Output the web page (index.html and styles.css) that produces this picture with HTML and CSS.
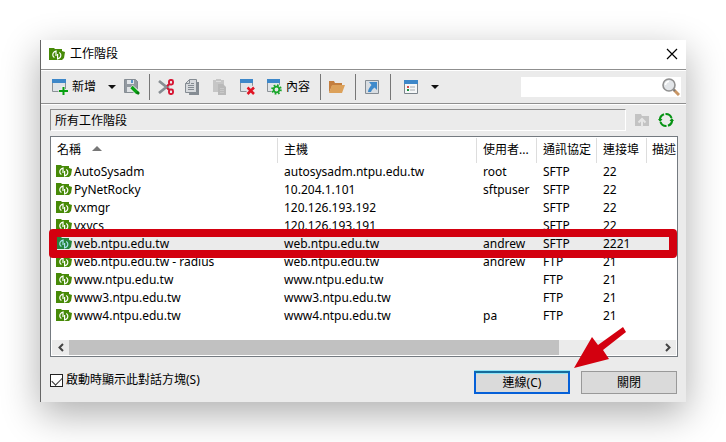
FILE: index.html
```html
<!DOCTYPE html>
<html lang="zh-Hant">
<head>
<meta charset="utf-8">
<title>工作階段</title>
<link rel="stylesheet" href="styles.css">
</head>
<body>
<svg class="defs" width="0" height="0" aria-hidden="true">
  <symbol id="session" viewBox="0 0 16 14">
    <path class="folder" d="M0 1h5l1 1h7v2l3 1-1 6-2 2H0z"/>
    <path class="mark" d="M7 9V4C4.800 4.800 3.600 6.200 3.800 8.200c.1 1 .8 1.900 1.600 2.400M8.600 7v5c2.200-.8 3.400-2.200 3.200-4.200-.1-1-.8-1.900-1.600-2.400" fill="none" stroke-width="1.200"/>
  </symbol>
</svg>
<main class="dialog">
  <header class="titlebar">
    <svg class="session-icon" width="16" height="14"><use href="#session"/></svg>
    <h1>工作階段</h1>
    <button class="close" aria-label="關閉視窗"><svg width="12" height="12" viewBox="0 0 12 12"><path d="M1 1l10 10M11 1L1 11" stroke="#000" stroke-width="1.200"/></svg></button>
  </header>

  <div class="toolbar">
    <div class="group">
      <button class="labelled"><svg width="16" height="16" viewBox="0 0 16 16"><path d="M.5.5h13v12H.5z" fill="#dfe4e8" stroke="#8b9196"/><path d="M0 0h14v4H0z" fill="#3d87c9"/><path d="M11 7v9M6.500 12H16" stroke="#ebebeb" stroke-width="4"/><path d="M11.500 8v8M7 12h9" stroke="#07a010" stroke-width="2"/></svg>新增</button>
      <button class="caret" aria-label="新增選項"><svg width="8" height="4" viewBox="0 0 8 4"><path d="M0 0h8L4 4z" fill="#111"/></svg></button>
      <button aria-label="儲存"><svg width="16" height="16" viewBox="0 0 16 16"><path d="M.5.500h11l2 2v11H.500z" fill="#9299a0" stroke="#858c93"/><path d="M3 1h7v4H3z" fill="#e2e5e8"/><path d="M7 1h2v3H7z" fill="#5994c9"/><path d="M3 8h7v5H3z" fill="#dfe2e5"/><path d="M7 8l7 6" stroke="#ebebeb" stroke-width="5"/><path d="M7.500 8l6 6" stroke="#0aa315" stroke-width="3.400"/><path d="M13 13l2 2" stroke="#067a0d" stroke-width="2.500"/></svg></button>
    </div>
    <div class="group spaced">
      <button aria-label="剪下"><svg width="16" height="16" viewBox="0 0 16 16"><path d="M1 2l10 8M1 14l10-8" stroke="#878d92" stroke-width="2.800"/><g fill="none" stroke="#d61432" stroke-width="1.900"><rect x="11" y="1" width="4" height="4.500" rx="1.500"/><rect x="11" y="10.500" width="4" height="4.500" rx="1.500"/><path d="M9 7l2.500-2M9 9l2.500 2"/></g></svg></button>
      <button aria-label="複製"><svg width="16" height="16" viewBox="0 0 16 16"><path d="M5 3h9v13H4" fill="#858c93"/><path d="M4.500.500h7v13h-11v-9z" fill="#d7dadd" stroke="#858c93"/><path d="M4.500.500v4h-4M3 6.500h6M3 8.500h6M3 10.500h6M6 4.500h3" stroke="#858c93" fill="none"/></svg></button>
      <button aria-label="貼上"><svg width="16" height="16" viewBox="0 0 16 16"><path d="M1 1h3V0h5v1h3v12H1z" fill="#c6c6c6"/><path d="M4 2h5v1H4z" fill="#ddd"/><path d="M6 5h5l3 3v8H6z" fill="#b9b9b9"/><path d="M8 9.500h4M8 11.500h4M8 13.500h4" stroke="#c8c8c8"/></svg></button>
      <button aria-label="刪除"><svg width="16" height="16" viewBox="0 0 16 16"><path d="M1.500.500h12v12h-12z" fill="#dfe4e8" stroke="#8b9196"/><path d="M1 0h13v4H1z" fill="#3d87c9"/><path d="M8 8l7 7M15 8l-7 7" stroke="#ebebeb" stroke-width="4"/><path d="M8.500 8.500l6.500 6.500M15 8.500l-6.500 6.500" stroke="#e01525" stroke-width="2.500"/></svg></button>
      <button class="labelled"><svg width="16" height="16" viewBox="0 0 16 16"><path d="M1.500.500h12v12h-12z" fill="#dfe4e8" stroke="#8b9196"/><path d="M1 0h13v4H1z" fill="#3d87c9"/><circle cx="10.500" cy="10.500" r="5.500" fill="#ebebeb"/><circle cx="10.500" cy="10.500" r="4.300" fill="none" stroke="#19a62a" stroke-width="2" stroke-dasharray="1.700 1.677"/><circle cx="10.500" cy="10.500" r="2.800" fill="#e5e8e5" stroke="#19a62a" stroke-width="1.800"/></svg>內容</button>
    </div>
    <div class="group">
      <button aria-label="開啟資料夾"><svg width="16" height="14" viewBox="0 0 16 14"><path d="M0 1h5l1 2h7v3H3L0 13z" fill="#c47f3f"/><path d="M3 5h13l-3 8H0z" fill="#dca15a"/></svg></button>
    </div>
    <div class="group">
      <button aria-label="建立捷徑"><svg width="16" height="16" viewBox="0 0 16 16"><path d="M1.500 1.500h13v13h-13z" fill="#d8dde2" stroke="#858c93"/><path d="M5 3h8v8l-2.500-2.500C9 10 7.500 11 7 13H4c0-3 2-5 3.500-7z" fill="#3f8acb"/></svg></button>
    </div>
    <div class="group view">
      <button aria-label="檢視"><svg width="16" height="14" viewBox="0 0 16 14"><path d="M1.500.500h13v13h-13z" fill="#f5f7f8" stroke="#7c858c"/><path d="M1 0h14v4H1z" fill="#3d87c9"/><path d="M4 6h2v2H4z" fill="#d34a4a"/><path d="M4 9h2v2H4z" fill="#16913a"/><path d="M7 7h5M7 10h5" stroke="#a8adb2"/></svg></button>
      <button class="caret" aria-label="檢視選項"><svg width="8" height="4" viewBox="0 0 8 4"><path d="M0 0h8L4 4z" fill="#111"/></svg></button>
    </div>
    <div class="search">
      <input type="text" aria-label="搜尋">
      <svg width="18" height="18" viewBox="0 0 18 18"><path d="M12 12l5 5" stroke="#c99664" stroke-width="3"/><path d="M11 11l2 2" stroke="#777" stroke-width="2"/><circle cx="7" cy="7" r="6" fill="#e2e5e8" stroke="#909090" stroke-width="1.600"/><path d="M3.500 7A3.500 3.500 0 0 1 7 3.500" stroke="#fff" stroke-width="1.500" fill="none"/></svg>
    </div>
  </div>

  <div class="content">
    <div class="location">
      <div class="path">所有工作階段</div>
      <button aria-label="上一層"><svg width="16" height="16" viewBox="0 0 16 16"><path d="M1 2h6l1 2h7v10H1z" fill="#c3c3c3"/><path d="M8 15V8M4.500 10.500L8 7l3.500 3.500" stroke="#e6e6e6" stroke-width="2" fill="none"/></svg></button>
      <button aria-label="重新整理"><svg width="16" height="16" viewBox="0 0 16 16"><g fill="none" stroke="#079314" stroke-width="2.200"><path d="M2 8.500A6 6 0 0 1 6 2.300M7.500 2A6 6 0 0 1 13.500 6M14 7.500A6 6 0 0 1 10 13.700M8.500 14A6 6 0 0 1 2.500 10"/></g><path d="M0 7h4.500L2.200 10zM11.500 9H16l-2.200-3z" fill="#079314"/></svg></button>
    </div>

    <div class="list">
      <table>
        <colgroup><col class="c-name"><col class="c-host"><col class="c-short"><col class="c-short"><col class="c-port"><col></colgroup>
        <thead><tr><th>名稱 <svg class="sort" width="10" height="5" viewBox="0 0 10 5"><path d="M0 5h10L5 0z" fill="#777"/></svg></th><th>主機</th><th>使用者...</th><th>通訊協定</th><th>連接埠</th><th>描述</th></tr></thead>
        <tbody>
          <tr><td><svg class="session-icon" width="16" height="14"><use href="#session"/></svg>AutoSysadm</td><td>autosysadm.ntpu.edu.tw</td><td>root</td><td>SFTP</td><td>22</td><td></td></tr>
          <tr><td><svg class="session-icon" width="16" height="14"><use href="#session"/></svg>PyNetRocky</td><td>10.204.1.101</td><td>sftpuser</td><td>SFTP</td><td>22</td><td></td></tr>
          <tr><td><svg class="session-icon" width="16" height="14"><use href="#session"/></svg>vxmgr</td><td>120.126.193.192</td><td></td><td>SFTP</td><td>22</td><td></td></tr>
          <tr><td><svg class="session-icon" width="16" height="14"><use href="#session"/></svg>vxvcs</td><td>120.126.193.191</td><td></td><td>SFTP</td><td>22</td><td></td></tr>
          <tr class="selected"><td><span class="highlight"></span><svg class="session-icon" width="16" height="14"><use href="#session"/></svg>web.ntpu.edu.tw</td><td>web.ntpu.edu.tw</td><td>andrew</td><td>SFTP</td><td>2221</td><td></td></tr>
          <tr><td><svg class="session-icon" width="16" height="14"><use href="#session"/></svg>web.ntpu.edu.tw - radius</td><td>web.ntpu.edu.tw</td><td>andrew</td><td>FTP</td><td>21</td><td></td></tr>
          <tr><td><svg class="session-icon" width="16" height="14"><use href="#session"/></svg>www.ntpu.edu.tw</td><td>www.ntpu.edu.tw</td><td></td><td>FTP</td><td>21</td><td></td></tr>
          <tr><td><svg class="session-icon" width="16" height="14"><use href="#session"/></svg>www3.ntpu.edu.tw</td><td>www3.ntpu.edu.tw</td><td></td><td>FTP</td><td>21</td><td></td></tr>
          <tr><td><svg class="session-icon" width="16" height="14"><use href="#session"/></svg>www4.ntpu.edu.tw</td><td>www4.ntpu.edu.tw</td><td>pa</td><td>FTP</td><td>21</td><td></td></tr>
        </tbody>
      </table>
      <div class="scrollbar">
        <button aria-label="向左捲動"><svg width="6" height="9" viewBox="0 0 6 9"><path d="M5 1L1.500 4.500 5 8" fill="none" stroke="#444" stroke-width="2"/></svg></button>
        <div class="track"><div class="thumb"></div></div>
        <button aria-label="向右捲動"><svg width="6" height="9" viewBox="0 0 6 9"><path d="M1 1l3.500 3.500L1 8" fill="none" stroke="#444" stroke-width="2"/></svg></button>
      </div>
    </div>

    <footer class="footer">
      <label class="startup"><input type="checkbox" checked>啟動時顯示此對話方塊(S)</label>
      <div class="actions">
        <button class="primary">連線(C)</button>
        <button>關閉</button>
        <svg class="arrow" width="54" height="44" viewBox="0 0 54 44" aria-hidden="true"><path d="M1 42L19 11l6 8L50 1l3 5-23 18 6 9z" fill="#d3000f"/></svg>
      </div>
    </footer>
  </div>
</main>
</body>
</html>
```

FILE: styles.css
```css
* {
  box-sizing: border-box;
}

body {
  margin: 0;
  padding: 40px;
  background: #fff;
  color: #000;
  font: 12px/18px "Noto Sans", "Noto Sans CJK TC", sans-serif;
}

button {
  display: flex;
  align-items: center;
  justify-content: center;
  padding: 0;
  border: 0;
  background: none;
  color: inherit;
  font: inherit;
}

svg {
  flex: none;
}

.defs {
  position: absolute;
}

.session-icon {
  fill: #478a08;
  stroke: #fff;
}

.folder {
  stroke: none;
}

.dialog {
  border-left: 1px solid #666;
  background: #ebebeb;
  box-shadow: 0 12px 36px rgba(0, 0, 0, 0.32);
}

.titlebar {
  display: flex;
  align-items: center;
  gap: 5px;
  height: 30px;
  padding: 0 8px 2px;
  border-bottom: 1px solid #8f8f8f;
  background: #fff;
}

.titlebar h1 {
  margin: 0;
  font-size: 12px;
  font-weight: 400;
}

.close {
  margin-left: auto;
}

.toolbar {
  display: flex;
  align-items: center;
  height: 34px;
  padding: 0 5px 0 11px;
  border-top: 1px solid #fff;
  border-bottom: 1px solid #8f8f8f;
}

.group {
  display: flex;
  align-items: center;
  height: 26px;
}

.group + .group {
  margin-left: 10px;
  padding-left: 8px;
  border-left: 1px solid #777;
}

.group .labelled {
  gap: 4px;
}

.group .caret {
  width: 8px;
  margin: 0 8px 0 12px;
}

.group + .spaced {
  gap: 11px;
  margin-left: 9px;
}

.group + .view {
  padding-left: 12px;
}

.search {
  display: flex;
  align-items: center;
  width: 160px;
  height: 20px;
  margin-left: auto;
  padding-right: 1px;
  background: #fff;
}

.search input {
  flex: 1;
  min-width: 0;
  border: 0;
  background: none;
  font: inherit;
  outline: 0;
}

.content {
  padding: 4px 8px 8px 9px;
  border-top: 1px solid #fff;
}

.location {
  display: flex;
  align-items: center;
  gap: 8px;
  padding-right: 4px;
}

.path {
  flex: 1;
  height: 22px;
  padding: 2px 4px 0;
  border: 1px solid;
  border-color: #8f8f8f #fff #fff #8f8f8f;
}

.list {
  margin-top: 5px;
  border: 1px solid #747a80;
  background: #fff;
}

table {
  width: 100%;
  border-collapse: collapse;
  table-layout: fixed;
}

.c-name {
  width: 227px;
}

.c-host {
  width: 199px;
}

.c-short {
  width: 60px;
}

.c-port {
  width: 50px;
}

th,
td {
  padding: 0 0 0 6px;
  text-align: left;
  white-space: nowrap;
}

th {
  height: 26px;
  background: linear-gradient(#ddd, #ddd) right bottom / 1px 25px no-repeat;
  font-weight: 400;
}

th:last-child {
  padding-left: 5px;
  background: none;
}

.sort {
  margin-left: 8px;
  vertical-align: 3px;
}

td {
  height: 18px;
}

td:first-child {
  padding-left: 5px;
}

td .session-icon {
  margin-right: 2px;
  vertical-align: -2px;
}

.selected {
  position: relative;
  background: #ebebeb;
}

.selected .session-icon {
  fill: #25843b;
  stroke: #a9e0ef;
}

.highlight {
  position: absolute;
  inset: -6px 0 -5px -2px;
  border: 8px solid #d3000f;
  border-radius: 4px;
}

.scrollbar {
  display: flex;
  height: 17px;
  margin-top: 14px;
  padding: 1px;
}

.scrollbar button {
  width: 17px;
  background: #ebebeb;
}

.track {
  flex: 1;
  background: #ebebeb;
}

.thumb {
  width: 83%;
  height: 100%;
  background: #c1c1c1;
}

.footer {
  display: flex;
  align-items: flex-start;
  justify-content: space-between;
  padding: 14px 1px 0 0;
}

.startup {
  display: flex;
  align-items: center;
  gap: 3px;
}

.startup input {
  width: 13px;
  height: 13px;
  margin: 0;
  border: 1px solid #222;
  background: #fff;
  appearance: none;
}

.startup input:checked::before {
  content: "";
  display: block;
  width: 9px;
  height: 5px;
  margin: 2px 1px;
  border: solid #333;
  border-width: 0 0 1px 1px;
  transform: rotate(-45deg);
}

.actions {
  position: relative;
  display: flex;
  gap: 11px;
}

.actions button {
  width: 96px;
  height: 23px;
  border: 1px solid #999;
  background: #dadada;
}

.actions .primary {
  border: 2px solid #0560d8;
  border-top-color: #176b9a;
  box-shadow: 0 -1px #8fe6fa, inset 0 1px #8fe6fa;
}

.arrow {
  position: absolute;
  right: 50px;
  bottom: 24px;
}
```
